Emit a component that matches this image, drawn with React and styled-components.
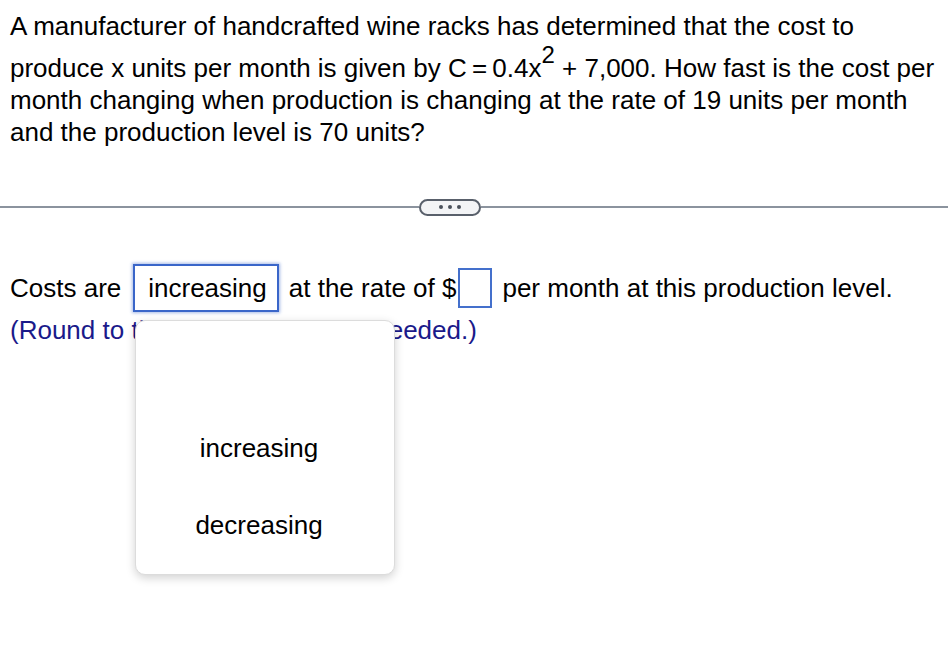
import React from 'react'
import styled, { createGlobalStyle } from 'styled-components';

const Global = createGlobalStyle`
  html, body { margin: 0; padding: 0; background: #fff; }
  body {
    font-family: "Liberation Sans", Arial, sans-serif;
    color: #000;
  }
`;

const Page = styled.div`
  width: 948px;
  height: 656px;
  overflow: hidden;
  position: relative;
`;

const Question = styled.div`
  padding: 10px 0 0 10px;
  font-size: 26px;
`;

const Line = styled.div`
  line-height: 32px;
  white-space: nowrap;
  margin-top: ${({ gap }) => gap || 0}px;
`;

const Sup = styled.sup`
  font-size: 24px;
  line-height: 0;
  vertical-align: 14px;
  margin: 0;
`;

const Divider = styled.div`
  display: flex;
  align-items: center;
  margin-top: 50px;
  height: 18px;
`;

const Rule = styled.div`
  height: 1.5px;
  background: #8b939e;
  width: ${({ w }) => (w ? `${w}px` : 'auto')};
  flex: ${({ w }) => (w ? 'none' : 1)};
`;

const Pill = styled.button`
  width: 62px;
  height: 17px;
  box-sizing: border-box;
  border: 2px solid #59606b;
  border-radius: 9px;
  background: #f3f4f6;
  display: flex;
  align-items: center;
  justify-content: center;
  gap: 5px;
  padding: 0;
`;

const Dot = styled.span`
  width: 4px;
  height: 4px;
  border-radius: 50%;
  background: #4a505a;
`;

const Answer = styled.div`
  position: relative;
  padding-left: 10px;
  margin-top: 46px;
  font-size: 26px;
`;

const Row = styled.div`
  display: flex;
  align-items: center;
  height: 52px;
  white-space: nowrap;
`;

const Select = styled.div`
  box-sizing: border-box;
  height: 48px;
  padding: 0 10px 0 13px;
  margin: 0 10px 0 12px;
  border: 2px solid #3a66c9;
  box-shadow: 0 0 3px 1px rgba(58, 102, 201, 0.45);
  display: flex;
  align-items: center;
`;

const Input = styled.div`
  box-sizing: border-box;
  width: 34px;
  height: 40px;
  border: 2px solid #4470cc;
  margin: 0 10px 0 2px;
`;

const Note = styled.div`
  color: #1a1a8a;
  line-height: 32px;
  margin-top: 0;
`;

const Menu = styled.div`
  position: absolute;
  left: 135px;
  top: 58px;
  width: 260px;
  height: 255px;
  box-sizing: border-box;
  background: #fff;
  border: 1px solid #dcdcdc;
  border-radius: 10px;
  box-shadow: 0 3px 10px rgba(0, 0, 0, 0.18);
  display: flex;
  flex-direction: column;
  justify-content: flex-end;
  padding: 0 12px 10px 0;
`;

const Option = styled.div`
  height: 77px;
  display: flex;
  align-items: center;
  justify-content: center;
  font-size: 26px;
`;

export default function App() {
  return (
    <Page>
      <Global />
      <Question>
        <Line>A manufacturer of handcrafted wine racks has determined that the cost to</Line>
        <Line gap={10}>
          produce x units per month is given by C{'\u2009'}={'\u2009'}0.4x<Sup>2</Sup> + 7,000. How fast is the cost per
        </Line>
        <Line>month changing when production is changing at the rate of 19 units per month</Line>
        <Line>and the production level is 70 units?</Line>
      </Question>
      <Divider>
        <Rule w={419} />
        <Pill>
          <Dot />
          <Dot />
          <Dot />
        </Pill>
        <Rule />
      </Divider>
      <Answer>
        <Row>
          Costs are
          <Select>increasing</Select>
          at the rate of $
          <Input />
          per month at this production level.
        </Row>
        <Note>(Round to the nearest dollar as needed.)</Note>
        <Menu>
          <Option>increasing</Option>
          <Option>decreasing</Option>
        </Menu>
      </Answer>
    </Page>
  )
}
